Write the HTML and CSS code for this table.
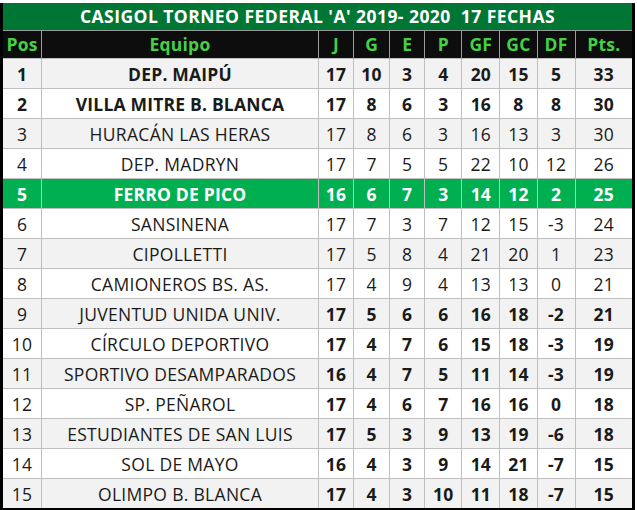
FILE: index.html
```html
<!DOCTYPE html>
<html lang="es">
<head>
<meta charset="utf-8">
<title>Casigol Torneo Federal A</title>
<link rel="stylesheet" href="styles.css">
</head>
<body>
<div class="sheet">
<table class="standings">
<colgroup>
<col class="c-pos"><col class="c-team"><col class="c-j"><col class="c-g"><col class="c-e"><col class="c-p"><col class="c-gf"><col class="c-gc"><col class="c-df"><col class="c-pts">
</colgroup>
<thead>
<tr class="title"><th colspan="10">CASIGOL TORNEO FEDERAL 'A' 2019- 2020&nbsp; 17 FECHAS</th></tr>
<tr class="head"><th>Pos</th><th>Equipo</th><th>J</th><th>G</th><th>E</th><th>P</th><th>GF</th><th>GC</th><th>DF</th><th>Pts.</th></tr>
</thead>
<tbody>
<tr class="odd bold-all"><td>1</td><td>DEP. MAIPÚ</td><td>17</td><td>10</td><td>3</td><td>4</td><td>20</td><td>15</td><td>5</td><td>33</td></tr>
<tr class="bold-all"><td>2</td><td>VILLA MITRE B. BLANCA</td><td>17</td><td>8</td><td>6</td><td>3</td><td>16</td><td>8</td><td>8</td><td>30</td></tr>
<tr class="odd"><td>3</td><td>HURACÁN LAS HERAS</td><td>17</td><td>8</td><td>6</td><td>3</td><td>16</td><td>13</td><td>3</td><td>30</td></tr>
<tr><td>4</td><td>DEP. MADRYN</td><td>17</td><td>7</td><td>5</td><td>5</td><td>22</td><td>10</td><td>12</td><td>26</td></tr>
<tr class="hl bold-all"><td>5</td><td>FERRO DE PICO</td><td>16</td><td>6</td><td>7</td><td>3</td><td>14</td><td>12</td><td>2</td><td>25</td></tr>
<tr><td>6</td><td>SANSINENA</td><td>17</td><td>7</td><td>3</td><td>7</td><td>12</td><td>15</td><td>-3</td><td>24</td></tr>
<tr class="odd"><td>7</td><td>CIPOLLETTI</td><td>17</td><td>5</td><td>8</td><td>4</td><td>21</td><td>20</td><td>1</td><td>23</td></tr>
<tr><td>8</td><td>CAMIONEROS BS. AS.</td><td>17</td><td>4</td><td>9</td><td>4</td><td>13</td><td>13</td><td>0</td><td>21</td></tr>
<tr class="odd bold-num"><td>9</td><td>JUVENTUD UNIDA UNIV.</td><td>17</td><td>5</td><td>6</td><td>6</td><td>16</td><td>18</td><td>-2</td><td>21</td></tr>
<tr class="bold-num"><td>10</td><td>CÍRCULO DEPORTIVO</td><td>17</td><td>4</td><td>7</td><td>6</td><td>15</td><td>18</td><td>-3</td><td>19</td></tr>
<tr class="odd bold-num"><td>11</td><td>SPORTIVO DESAMPARADOS</td><td>16</td><td>4</td><td>7</td><td>5</td><td>11</td><td>14</td><td>-3</td><td>19</td></tr>
<tr class="bold-num"><td>12</td><td>SP. PEÑAROL</td><td>17</td><td>4</td><td>6</td><td>7</td><td>16</td><td>16</td><td>0</td><td>18</td></tr>
<tr class="odd bold-num"><td>13</td><td>ESTUDIANTES DE SAN LUIS</td><td>17</td><td>5</td><td>3</td><td>9</td><td>13</td><td>19</td><td>-6</td><td>18</td></tr>
<tr class="bold-num"><td>14</td><td>SOL DE MAYO</td><td>16</td><td>4</td><td>3</td><td>9</td><td>14</td><td>21</td><td>-7</td><td>15</td></tr>
<tr class="odd bold-num"><td>15</td><td>OLIMPO B. BLANCA</td><td>17</td><td>4</td><td>3</td><td>10</td><td>11</td><td>18</td><td>-7</td><td>15</td></tr>
</tbody>
</table>
</div>
</body>
</html>
```

FILE: styles.css
```css
html, body {
  margin: 0;
  padding: 0;
  background: #ffffff;
}

.sheet {
  padding-top: 3px;
  width: 637px;
}

.standings {
  border-collapse: collapse;
  table-layout: fixed;
  width: 635px;
  font-family: "Open Sans", "Noto Sans", sans-serif;
  font-size: 17.5px;
  letter-spacing: 0.3px;
  color: #1a1a1a;
  border-left: 3px solid #000;
  border-right: 3px solid #000;
  border-bottom: 4px solid #000;
}

.c-pos { width: 40px; }
.c-team { width: 276px; }
.c-j { width: 35px; }
.c-g { width: 36px; }
.c-e { width: 35px; }
.c-p { width: 37px; }
.c-gf { width: 38px; }
.c-gc { width: 37px; }
.c-df { width: 38px; }
.c-pts { width: 58px; }

.standings th,
.standings td {
  padding: 0;
  text-align: center;
  white-space: nowrap;
  overflow: hidden;
  line-height: 1;
}

.title th {
  height: 27px;
  background: #007635;
  color: #ffffff;
  font-weight: bold;
  letter-spacing: 0.45px;
  border-bottom: 1px solid #9a9a9a;
}

.head th {
  height: 27px;
  background: #0d0d0d;
  color: #45d045;
  font-weight: bold;
  letter-spacing: 0.2px;
  border-left: 1px solid #9a9a9a;
}

.head th:first-child {
  border-left: none;
}

.standings tbody td {
  height: 27px;
  padding-top: 2px;
  border: 1px solid #bfbfbf;
  font-weight: normal;
}

.standings tbody td:first-child {
  border-left: none;
}

.standings tbody td:last-child {
  border-right: none;
}

.standings tbody tr {
  background: #ffffff;
}

.standings tbody tr.odd {
  background: #f2f2f2;
}

.standings tbody tr.bold-all td {
  font-weight: bold;
  letter-spacing: 0.2px;
}

.standings tbody tr.bold-num td:nth-child(n+3) {
  font-weight: bold;
  letter-spacing: 0.2px;
}

.standings tbody tr.hl {
  background: #00b050;
}

.standings tbody tr.hl td {
  color: #ffffff;
}
```
